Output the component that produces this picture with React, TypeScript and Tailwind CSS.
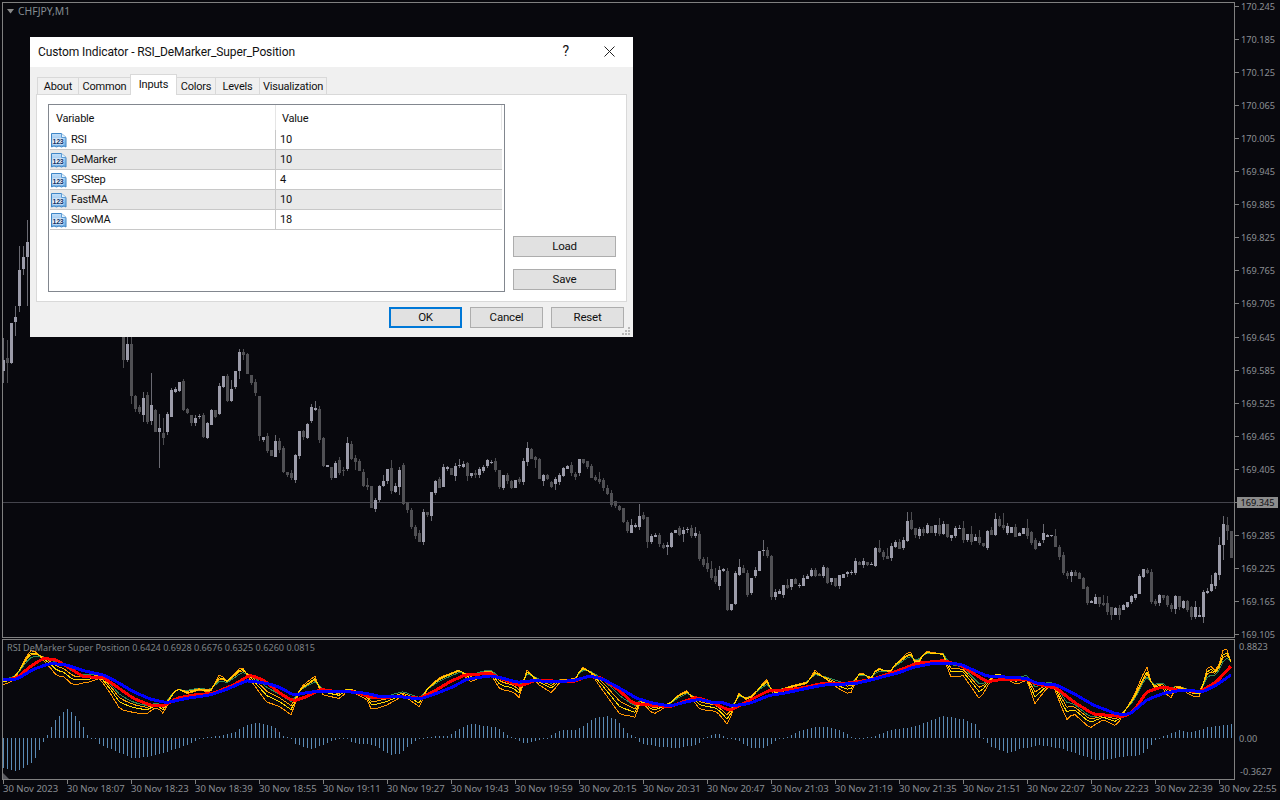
import React from "react";

type C = [number, number, number];
// body top, body bottom, 1 = light candle, 0 = dark candle; one every 4px
const LEFT: C[] = [[360,371,1],[358,363,0],[323,363,1],[317,322,1],[270,306,1],[257,269,1],[242,257,1]];
const MAIN: C[] = [
[337,360,0],[344,360,1],[344,396,0],[396,409,0],[407,412,0],[398,415,1],[395,422,0],[405,421,1],[410,432,0],[428,432,1],[433,438,0],[414,432,1],[390,417,1],[389,392,1],[382,391,1],[381,410,0],[409,413,0],[415,423,0],[418,423,1],[416,417,1],[415,437,0],[423,438,1],[410,425,1],[410,417,0],[386,414,1],[376,387,1],[376,401,0],[389,401,1],[371,387,1],[352,371,1],[352,355,0],[354,374,0],[375,383,0],[382,393,0],[396,436,0],[437,440,1],[436,451,0],[450,456,0],[441,457,1],[441,450,0],[448,472,0],[472,475,0],[473,478,0],[455,480,1],[431,456,1],[431,437,0],[424,438,1],[407,421,1],[408,410,1],[409,440,0],[438,466,0],[465,467,1],[467,478,0],[463,478,1],[460,473,0],[470,471,0],
[443,469,1],[444,459,0],[458,462,0],[461,471,0],[472,486,0],[485,487,0],[486,508,0],[500,509,1],[486,500,1],[481,486,1],[469,481,1],[468,491,0],[486,492,1],[470,487,1],[465,504,0],[502,510,0],[510,527,0],[527,536,0],[533,542,0],[512,542,1],[512,515,0],[492,516,1],[481,493,1],[479,488,0],[467,487,1],[467,469,1],[468,475,0],[466,476,1],[465,466,1],[464,467,1],[463,476,0],[473,476,1],[473,475,0],[469,475,1],[467,471,1],[460,466,1],[462,463,1],[461,470,0],[470,487,0],[475,488,1],[475,481,0],[481,488,0],[480,488,1],[479,482,0],[461,482,1],[448,462,1],[449,459,0],[457,460,0],[459,479,0],[475,481,1],[475,479,0],[482,487,0],[479,484,1],[475,482,1],[468,476,1],[466,469,1],[465,473,0],[474,477,0],[459,473,1],[459,463,0],[461,467,0],[466,478,0],[477,480,0],[479,482,0],[480,488,0],[488,494,0],[493,505,0],[501,506,0],[506,510,0],[508,522,0],[522,531,0],[525,533,1],[525,527,1],[516,527,1],[515,519,0],[517,542,0],[536,542,1],[535,537,1],[535,544,0],[545,548,0],[545,547,1],[533,547,1],[530,533,1],[528,535,0],
[530,534,1],[529,530,1],[528,536,0],[533,536,1],[534,559,0],[559,565,0],[563,569,0],[569,578,0],[576,582,0],[570,586,1],[569,571,1],[571,610,0],[604,610,1],[573,604,1],[567,575,1],[568,573,0],[573,595,0],[578,593,1],[570,576,1],[551,571,1],[550,551,1],[550,556,0],[556,597,0],[592,597,1],[591,594,1],[585,595,1],[585,588,0],[579,587,1],[579,584,0],[585,586,1],[578,586,1],[576,579,1],[570,576,1],[570,576,0],[574,576,0],[567,576,1],[568,583,0],[578,582,1],[578,586,0],[575,586,1],[574,578,1],[572,574,1],[572,573,1],[561,573,1],[562,565,0],[561,565,1],[562,565,0],[564,565,1],[548,566,1],[548,552,0],[552,557,0],[556,559,0],[546,558,1],[542,547,1],[542,549,0],[540,548,1],[521,541,1],[520,529,0],[528,535,0],[529,536,1],[529,533,0],[525,533,1],[526,533,0],[525,533,1],[525,534,0],[524,534,1],[524,537,0],[535,538,1],[528,536,1],[528,529,1],[528,540,0],[534,540,1],[534,542,0],[537,541,1],[537,543,0],[543,546,0],[531,548,1],[530,535,0],[519,535,1],[519,526,0],[525,528,0],[526,533,1],[527,533,1],[527,537,0],[533,536,1],
[528,534,1],[528,536,0],[532,543,0],[540,549,0],[543,546,1],[533,540,1],[535,537,1],[535,536,1],[536,547,0],[547,557,0],[555,573,0],[573,576,0],[572,576,1],[572,576,0],[573,579,0],[578,589,0],[587,603,0],[601,603,1],[597,604,1],[597,604,0],[603,605,0],[603,612,0],[607,615,0],[608,615,1],[608,615,0],[605,610,1],[602,607,1],[596,602,1],[594,598,1],[576,594,1],[569,577,1],[570,573,0],[572,602,0],[601,604,0],[595,603,1],[595,598,0],[596,605,0],[605,609,0],[596,609,1],[596,607,0],[601,608,1],[601,610,0],[607,617,0],[607,617,1],[615,617,1],[592,617,1],[591,593,1],[584,591,1],[573,586,1],[545,575,1],[524,545,1],[525,531,0],[531,558,0],
];
const WICKS: Record<number, [number, number]> = {3:[338,383],7:[340,383],15:[306,336],19:[246,312],23:[246,275],27:[220,306],151:[373,425],159:[414,468],163:[418,445],143:[392,422],527:[442,466],647:[517,548],639:[504,530],719:[566,590],763:[540,556],1219:[537,580],1223:[516,560],1227:[517,540],1151:[569,604],1003:[513,530]};

let seed = 7;
const rnd = () => { seed = (seed * 1103515 + 12345) % 2147483; return seed / 2147483; };
const candles = [...LEFT.map((c, i) => ({ x: 3 + i * 4, c })), ...MAIN.map((c, i) => ({ x: 123 + i * 4, c }))].map(({ x, c }) => {
  const long = rnd() > 0.88 ? 6 : 0;
  const w = WICKS[x] ?? [c[0] - Math.floor(rnd() * 4) - long, c[1] + Math.floor(rnd() * 4) + (rnd() > 0.9 ? 5 : 0)];
  return { x, t: c[0], b: Math.max(c[1], c[0] + 1), light: c[2] === 1, wt: w[0], wb: w[1] };
});

type P = [number, number];
const seg = (xb: number, yb: number, raw: number[][]): P[] => raw.map(([v, w]) => [xb + v / 3, yb + w / 3]);
const at = (pts: P[], x: number) => {
  if (x <= pts[0][0]) return pts[0][1];
  for (let i = 1; i < pts.length; i++) {
    if (x <= pts[i][0]) {
      const [x0, y0] = pts[i - 1];
      const [x1, y1] = pts[i];
      return y0 + ((y1 - y0) * (x - x0)) / (x1 - x0 || 1);
    }
  }
  return pts[pts.length - 1][1];
};
const XS = Array.from({ length: 308 }, (_, i) => 3 + i * 4);
const soft = (pts: P[], x: number) => (at(pts, x - 2) + 2 * at(pts, x) + at(pts, x + 2)) / 4;

const BLUE: P[] = [
  ...seg(0, 630, [[10,148],[50,148],[100,118],[150,100],[200,105],[250,122],[310,135],[350,155],[400,185],[450,207],[500,218],[560,205],[630,195],[680,178],[740,152],[800,160],[840,172],[880,195],[940,185],[1040,185],[1100,190],[1140,200],[1200,200],[1260,207]]),
  ...seg(420, 640, [[50,160],[100,140],[140,118],[210,107],[250,115],[290,127],[340,122],[400,125],[460,122],[510,108],[550,118],[600,145],[650,175],[700,190],[750,198],[810,183],[840,178],[880,188],[910,188],[935,198],[990,190],[1045,167],[1100,158],[1160,145],[1210,135],[1260,133]]),
  ...seg(840, 640, [[50,130],[100,118],[170,100],[220,82],[280,70],[360,72],[440,108],[480,110],[560,115],[590,130],[650,135],[700,160],[760,195],[830,222],[870,222],[920,180],[970,160],[1030,150],[1090,155],[1130,135],[1175,103]]),
];
const RED: P[] = [
  ...seg(0, 630, [[10,150],[50,145],[90,110],[130,85],[170,90],[210,115],[250,140],[310,143],[350,170],[400,205],[450,225],[490,228],[530,205],[580,195],[640,190],[700,165],[750,135],[790,150],[840,190],[880,213],[920,200],[960,178],[1010,185],[1060,185],[1120,203],[1200,200],[1260,205]]),
  ...seg(420, 640, [[40,155],[90,125],[135,105],[210,100],[250,118],[300,138],[350,120],[400,123],[460,125],[500,110],[540,112],[590,145],[640,190],[690,195],[750,200],[790,185],[830,172],[870,185],[930,212],[980,185],[1050,150],[1100,150],[1150,143],[1210,130],[1260,132]]),
  ...seg(840, 640, [[90,120],[180,90],[230,70],[310,62],[360,75],[440,125],[490,118],[560,117],[590,132],[650,145],[700,185],[760,222],[850,230],[880,215],[920,155],[970,140],[1010,150],[1080,155],[1130,125],[1175,75]]),
];
const MID: P[] = [
  ...seg(0, 630, [[10,155],[30,150],[50,135],[70,100],[90,70],[110,70],[130,85],[150,100],[170,120],[190,125],[220,150],[260,150],[300,140],[330,175],[360,215],[400,230],[440,238],[470,225],[490,240],[520,190],[535,180],[560,190],[600,180],[630,185],[660,140],[680,155],[725,115],[760,150],[800,195],[840,215],[875,240],[900,180],[945,148],[965,185],[1020,195],[1045,175],[1100,200],[1115,225],[1160,215],[1210,195],[1260,220]]),
  ...seg(420, 640, [[20,150],[60,115],[120,90],[150,115],[210,95],[240,135],[280,145],[298,160],[322,95],[355,125],[395,143],[420,120],[465,118],[485,85],[510,95],[550,140],[600,200],[650,218],[660,180],[700,210],[750,190],[770,170],[800,155],[840,195],[890,205],[925,240],[955,165],[985,180],[1040,122],[1060,160],[1110,140],[1160,130],[1185,100],[1240,130],[1260,140]]),
  ...seg(840, 640, [[30,150],[60,98],[95,115],[110,85],[150,95],[165,75],[210,40],[230,75],[255,40],[310,45],[330,95],[370,95],[420,155],[450,120],[470,100],[530,125],[560,115],[585,170],[620,140],[640,135],[680,215],[700,205],[750,245],[790,230],[830,245],[880,180],[920,97],[940,145],[965,135],[990,165],[1010,138],[1060,160],[1080,160],[1105,85],[1130,100],[1155,30],[1175,70]]),
];
const HIST: P[] = [
  ...seg(0, 630, [[10,415],[50,425],[100,395],[120,355],[130,335],[142,312],[165,270],[202,235],[240,275],[265,323],[285,323],[300,345],[350,365],[395,385],[450,380],[500,365],[560,345],[590,330],[610,323],[650,318],[700,308],[740,285],[770,278],[820,290],[850,320],[875,323],[880,340],[930,358],[970,345],[1000,330],[1040,325],[1060,340],[1120,345],[1170,375],[1200,370],[1240,335],[1260,325]]),
  ...seg(420, 640, [[20,290],[80,288],[130,260],[155,252],[230,262],[270,290],[290,294],[300,308],[320,308],[380,295],[400,280],[430,270],[470,270],[520,235],[560,228],[590,240],[620,280],[650,294],[660,310],[720,320],[770,324],[830,315],[850,294],[890,280],[920,294],[950,300],[990,325],[1030,325],[1080,295],[1100,290],[1130,275],[1190,260],[1220,260],[1260,270]]),
  ...seg(840, 640, [[10,275],[40,295],[100,290],[150,270],[220,260],[260,245],[310,228],[370,238],[410,255],[430,295],[450,320],[500,338],[550,325],[600,315],[660,325],[720,345],[770,362],[850,350],[900,345],[930,320],[950,295],[1020,270],[1050,278],[1100,262],[1175,252]]),
];
const thin = (k: number, off: number, wob: number) =>
  XS.map((x) => {
    const r = soft(RED, x);
    const m = at(MID, x);
    return `${x},${(r + k * (m - r) + off + wob * Math.sin(x / 17)).toFixed(1)}`;
  }).join(" ");
const line = (pts: P[]) => XS.map((x) => `${x},${soft(pts, x).toFixed(1)}`).join(" ");

const PRICES = ["170.245","170.185","170.125","170.065","170.005","169.945","169.885","169.825","169.765","169.705","169.645","169.585","169.525","169.465","169.405","169.345","169.285","169.225","169.165","169.105"];
const TIMES = ["30 Nov 2023","30 Nov 18:07","30 Nov 18:23","30 Nov 18:39","30 Nov 18:55","30 Nov 19:11","30 Nov 19:27","30 Nov 19:43","30 Nov 19:59","30 Nov 20:15","30 Nov 20:31","30 Nov 20:47","30 Nov 21:03","30 Nov 21:19","30 Nov 21:35","30 Nov 21:51","30 Nov 22:07","30 Nov 22:23","30 Nov 22:39","30 Nov 22:55"];
const ROWS = [["RSI","10"],["DeMarker","10"],["SPStep","4"],["FastMA","10"],["SlowMA","18"]];
const TABS = [["About","w-[42px]"],["Common","w-[53px]"],["Inputs","w-[47px]"],["Colors","w-[40px]"],["Levels","w-[45px]"],["Visualization","w-[68px]"]];

function IntIcon() {
  return (
    <svg width="16" height="16" viewBox="0 0 16 16" className="shrink-0">
      <defs>
        <linearGradient id="ig" x1="0" y1="0" x2="0" y2="1">
          <stop offset="0" stopColor="#c4e0fa" />
          <stop offset="1" stopColor="#6fabe2" />
        </linearGradient>
      </defs>
      <path d="M0.5 1.5 H10.5 L15 5.5 V15 L13 14 L10.5 15 L8 14 L5.5 15 L3 14 L0.5 15 Z" fill="url(#ig)" stroke="#3f86c6" strokeWidth="1" />
      <path d="M10.5 1.5 V5.5 H15" fill="#e4f1fc" stroke="#5d9cd4" strokeWidth="1" />
      <rect x="1.5" y="6.5" width="11" height="6" fill="#eef6fd" />
      <text x="7" y="12" textAnchor="middle" fontSize="7" fontWeight="700" fill="#0b2f66" fontFamily="Liberation Sans, sans-serif">123</text>
    </svg>
  );
}

function Btn({ label, cls }: { label: string; cls: string }) {
  return (
    <div className={`flex h-[21px] items-center justify-center bg-[#e1e1e1] text-[11.5px] tracking-[-0.2px] text-[#111] ${cls}`}>{label}</div>
  );
}

export default function App() {
  return (
    <div className="relative h-[800px] w-[1280px] overflow-hidden bg-[#08080d] [font-family:'Liberation_Sans',sans-serif]">
      <div className="flex flex-col pl-[2px] pt-[2px]">
        {/* price panel */}
        <div className="flex h-[636px]">
          <div className="relative h-[636px] w-[1233px] border border-[#808080]">
            <svg width="1231" height="634" viewBox="3 3 1231 634" shapeRendering="crispEdges" className="block">
              <rect x="3" y="502" width="1231" height="1" fill="#44444c" />
              {candles.map((c) => (
                <g key={c.x}>
                  <rect x={c.x} y={c.wt} width="1" height={c.wb - c.wt} fill={c.light ? "#6a6a72" : "#4c4c50"} />
                  <rect x={c.x - 1} y={c.t} width="3" height={c.b - c.t} fill={c.light ? "#9c9caa" : "#505054"} />
                </g>
              ))}
            </svg>
            <div className="absolute left-[4px] top-[2px] flex items-center gap-[4px]">
              <svg width="7" height="5" viewBox="0 0 7 5"><path d="M0 0 H7 L3.5 4.5 Z" fill="#8a8a8a" /></svg>
              <span className="text-[10.4px] leading-[12px] text-[#848c92]">CHFJPY,M1</span>
            </div>
          </div>
          <div className="-mt-[12px] flex h-[650px] w-[45px] flex-col">
            {PRICES.map((p, i) => (
              <div key={p} className={`flex shrink-0 items-center text-[9.2px] text-[#8b8f94] ${i === 9 ? "h-[34px] pb-px" : "h-[33px]"}`}>
                <span className="h-px w-[4px] bg-[#808080]" />
                {p === "169.345" ? (
                  <span className="-ml-[2px] flex h-[11px] w-[41px] items-center justify-center bg-[#8c8c8c] text-[#0c0c10]">{p}</span>
                ) : (
                  <span className="ml-[2px]">{p}</span>
                )}
              </div>
            ))}
          </div>
        </div>
        {/* indicator panel */}
        <div className="mt-px flex h-[141px]">
          <div className="relative h-[141px] w-[1233px] border border-[#808080]">
            <svg width="1231" height="139" viewBox="3 640 1231 139" className="block">
              <g shapeRendering="crispEdges">
                {XS.map((x) => {
                  const y = Math.round(at(HIST, x));
                  return <rect key={x} x={x} y={Math.min(y, 738)} width="1" height={Math.max(Math.abs(y - 738), 1)} fill="#5a8bb6" />;
                })}
              </g>
              <polygon points="3,773 9,779 3,779" fill="#5a5a60" />
              <g fill="none" shapeRendering="crispEdges">
                <polyline points={thin(1.4, 2, 0.5)} stroke="#ff9500" strokeWidth="1" />
                <polyline points={thin(0.58, -2.5, 1.5)} stroke="#2e8b57" strokeWidth="1" />
                <polyline points={thin(0.82, -1.5, 0.8)} stroke="#ffa500" strokeWidth="1" />
                <polyline points={thin(1.05, 0, 0.4)} stroke="#ffd700" strokeWidth="1" />
                <polyline points={line(RED)} stroke="#ff0000" strokeWidth="3" strokeLinejoin="round" />
                <polyline points={line(BLUE)} stroke="#0000ff" strokeWidth="3" strokeLinejoin="round" />
              </g>
            </svg>
            <div className="absolute left-[4px] top-[2px] whitespace-nowrap text-[9.1px] leading-[12px] text-[#7f8488]">
              RSI DeMarker Super Position 0.6424 0.6928 0.6676 0.6325 0.6260 0.0815
            </div>
          </div>
          <div className="relative w-[45px] text-[9.2px] text-[#8b8f94]">
            <span className="absolute left-[4px] top-[2px] leading-[12px]">0.8823</span>
            <span className="absolute left-[4px] top-[94px] leading-[12px]">0.00</span>
            <span className="absolute left-[5px] top-[127px] leading-[12px]">-0.3627</span>
          </div>
        </div>
        {/* time axis */}
        <div className="flex pl-px">
          {TIMES.map((t) => (
            <div key={t} className="flex w-[64px] shrink-0 flex-col items-start">
              <span className="h-[4px] w-px bg-[#808080]" />
              <span className="mt-[-1px] whitespace-nowrap text-[9.5px] leading-[12px] text-[#8b8f94]">{t}</span>
            </div>
          ))}
        </div>
      </div>

      {/* dialog */}
      <div className="absolute left-[30px] top-[37px] flex h-[300px] w-[603px] flex-col bg-[#f0f0f0] text-[11px] tracking-[-0.2px] text-[#111] [font-family:Roboto,sans-serif]">
        <div className="flex h-[30px] shrink-0 items-center bg-white pl-[8px] pr-[18px] text-[12px] tracking-[-0.1px] text-[#111]">
          <span className="flex-1">Custom Indicator - RSI_DeMarker_Super_Position</span>
          <span className="mr-[34px] -translate-x-px -translate-y-px text-[14px] leading-none">?</span>
          <svg width="11" height="11" viewBox="0 0 11 11" className="-translate-y-px"><path d="M0.5 0.5 L10.5 10.5 M10.5 0.5 L0.5 10.5" stroke="#222" strokeWidth="1" /></svg>
        </div>
        <div className="flex flex-1 flex-col px-[6px]">
          <div className="z-10 mt-[7px] flex h-[20px] items-end pl-[2px] tracking-[-0.2px]">
            {TABS.map(([label, w]) =>
              label === "Inputs" ? (
                <div key={label} className={`-mb-px -ml-px flex h-[21px] items-start justify-center border border-b-0 border-[#d9d9d9] bg-white pt-[2px] ${w}`}>{label}</div>
              ) : (
                <div key={label} className={`-ml-px flex h-[17px] items-center justify-center border border-b-0 border-[#d9d9d9] bg-[#f0f0f0] pt-[2px] ${w}`}>{label}</div>
              )
            )}
          </div>
          <div className="flex h-[208px] border border-[#d9d9d9] bg-white pl-[11px] pt-[9px]">
            <div className="flex h-[188px] w-[457px] flex-col border border-[#82878f] bg-white pl-px pr-px">
              <div className="flex h-[25px] shrink-0 items-center">
                <span className="flex h-[25px] w-[226px] items-center border-r border-[#e5e5e5] pl-[6px] pt-[4px]">Variable</span>
                <span className="flex h-[25px] flex-1 items-center pl-[6px] pt-[4px]">Value</span>
                <span className="mr-px h-[25px] w-px bg-[#e5e5e5]" />
              </div>
              {ROWS.map(([name, val], i) => (
                <div key={name} className={`mr-px flex h-[20px] shrink-0 items-center border-b border-[#c8c8c8] ${i % 2 === 1 ? "bg-[#e9e9e9]" : "bg-white"}`}>
                  <div className="flex h-[19px] w-[226px] items-center border-r border-[#c8c8c8] pl-px">
                    <IntIcon />
                    <span className="ml-[4px] pt-[2px]">{name}</span>
                  </div>
                  <span className="pl-[4px] pt-[2px]">{val}</span>
                </div>
              ))}
            </div>
            <div className="ml-[8px] flex h-[188px] w-[103px] flex-col justify-end gap-[12px] pb-[2px]">
              <Btn label="Load" cls="w-[103px] border border-[#adadad]" />
              <Btn label="Save" cls="w-[103px] border border-[#adadad]" />
            </div>
          </div>
          <div className="mt-[5px] flex justify-end gap-[8px] pr-[3px]">
            <Btn label="OK" cls="w-[73px] border-2 border-[#0078d7]" />
            <Btn label="Cancel" cls="w-[73px] border border-[#adadad]" />
            <Btn label="Reset" cls="w-[73px] border border-[#adadad]" />
          </div>
        </div>
        <svg width="8" height="8" viewBox="0 0 8 8" className="absolute bottom-[2px] right-[3px]" shapeRendering="crispEdges">
          <g fill="#b8b8b8"><rect x="6" y="0" width="2" height="2"/><rect x="3" y="3" width="2" height="2"/><rect x="6" y="3" width="2" height="2"/><rect x="0" y="6" width="2" height="2"/><rect x="3" y="6" width="2" height="2"/><rect x="6" y="6" width="2" height="2"/></g>
        </svg>
      </div>
    </div>
  );
}
